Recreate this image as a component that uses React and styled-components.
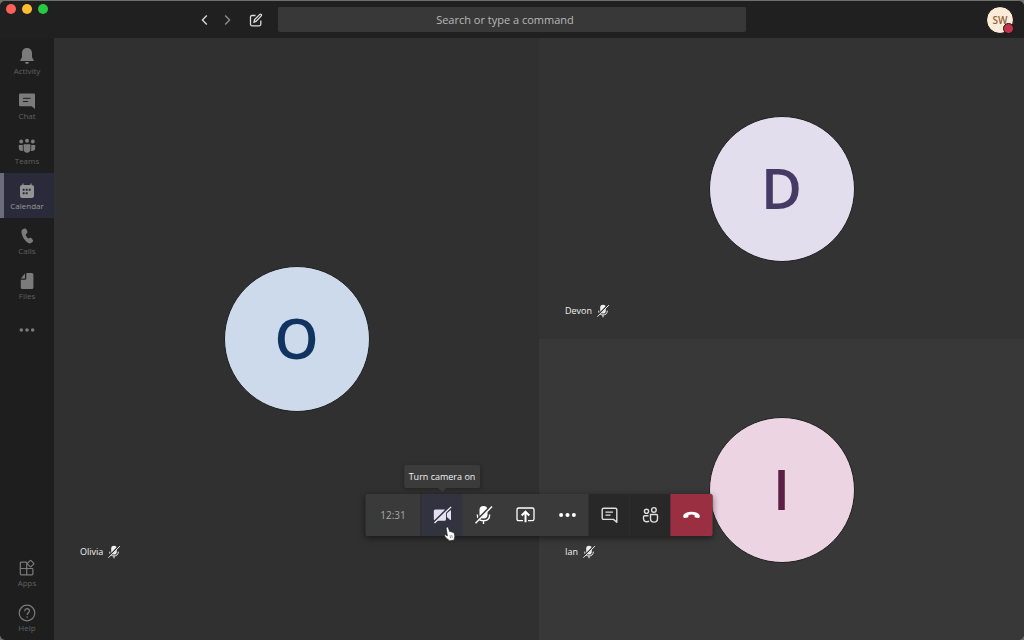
import { styled, createGlobalStyle } from "styled-components"

const GlobalStyle = createGlobalStyle`
    * {
        box-sizing: border-box;
    }
    body {
        margin: 0;
        background: #6d716e;
        font-family: "Open Sans", "Noto Sans", sans-serif;
    }
    button, input {
        font-family: inherit;
    }
`

const BellIcon = () => (
    <svg width="16" height="18" viewBox="0 0 16 18" fill="currentColor">
        <path d="M8 1C4.900 1 3 3.300 3 6v4.200L1.300 13.200v.8h13.400v-.8L13 10.200V6c0-2.700-1.900-5-5-5z" />
        <path d="M6 15h4c-.2 1.200-1 1.900-2 1.900S6.200 16.200 6 15z" />
    </svg>
)

const ChatIcon = () => (
    <svg width="16" height="18" viewBox="0 0 16 18">
        <path d="M1.300 1.500h13.400q1.300 0 1.300 1.300V17l-3.300-2.800H1.300Q0 14.200 0 12.900V2.800q0-1.300 1.300-1.300z" fill="currentColor" />
        <path d="M4 6.300h7.500M4 9.500h5" stroke="#1e1e1e" strokeWidth="1" />
    </svg>
)

const TeamsIcon = () => (
    <svg width="18" height="18" viewBox="0 0 18 18" fill="currentColor">
        <circle cx="3.200" cy="4.500" r="1.900" />
        <circle cx="9" cy="3.700" r="2" />
        <circle cx="14.800" cy="4.500" r="1.900" />
        <path d="M5.600 7.300h6.800v5.300c0 2-1.400 3.200-3.400 3.200s-3.400-1.200-3.400-3.200z" />
        <path d="M.8 8h4v4.500c0 .6.100 1.100.3 1.500C2.300 14.400.8 13 .8 11zM17.200 8h-4v4.500c0 .6-.1 1.100-.3 1.500 2.800.4 4.300-1 4.300-3z" />
    </svg>
)

const CalendarIcon = () => (
    <svg width="16" height="18" viewBox="0 0 16 18">
        <path d="M4 1.500v3M12 1.500v3" stroke="currentColor" strokeWidth="1.200" />
        <rect x="1" y="3" width="14" height="13" rx="2.200" fill="currentColor" />
        <path d="M6.700 7.800h1.900M9.700 7.800h1.900M3.700 7.800h1.900M3.700 11.200h1.900M6.700 11.200h1.900" stroke="#272735" strokeWidth="1.900" />
    </svg>
)

const PhoneIcon = () => (
    <svg width="16" height="18" viewBox="0 0 16 18" fill="currentColor">
        <path d="M4.300 2.100l1.500-.5c.8-.2 1.400.1 1.700.8l.9 2.200c.2.600.1 1.100-.3 1.500L6.700 7.400c.3 1.500 1.300 3.100 2.500 4l1.900-.6c.6-.2 1.100 0 1.400.5l1.300 1.800c.4.600.4 1.200-.1 1.700l-.9.8c-1 .9-2.200 1-3.400.4C6 14.300 3.400 10 2.500 5.800c-.3-1.700.3-3.200 1.800-3.700z" />
    </svg>
)

const FileIcon = () => (
    <svg width="16" height="18" viewBox="0 0 16 18" fill="currentColor">
        <path d="M7.300 1h5.500q1.600 0 1.600 1.600v12.800q0 1.600-1.600 1.600H3.400q-1.600 0-1.600-1.600V7.800h4q1.500 0 1.500-1.500z" />
        <path d="M6 1.600v4.300q0 .6-.6.6H1.900z" />
    </svg>
)

const DotsIcon = ({ size }) => (
    <svg width={size} height={size} viewBox="0 0 18 18" fill="currentColor">
        <circle cx="2.600" cy="9" r="2" />
        <circle cx="9" cy="9" r="2" />
        <circle cx="15.400" cy="9" r="2" />
    </svg>
)

const AppsIcon = () => (
    <svg width="18" height="18" viewBox="0 0 18 18" fill="none" stroke="currentColor" strokeWidth="1.200">
        <path d="M8.700 3.200H3.300q-1 0-1 1v10.600q0 1 1 1h10.600q1 0 1-1V10.200q0-.7-.7-.7H2.300M8.700 3.200v12.600" />
        <rect x="10.100" y="2.100" width="5" height="5" rx=".7" transform="rotate(45 12.600 4.600)" />
    </svg>
)

const HelpIcon = () => (
    <svg width="18" height="18" viewBox="0 0 18 18" fill="none" stroke="currentColor" strokeWidth="1.200">
        <circle cx="9" cy="9" r="7.800" />
        <path d="M6.700 7.200c0-1.600 1-2.500 2.400-2.500s2.300.9 2.300 2.200c0 1.800-2.300 2-2.300 4.100" />
        <circle cx="9.100" cy="13" r=".5" fill="currentColor" strokeWidth=".6" />
    </svg>
)

const ChevronIcon = ({ forward }) => (
    <svg width="7" height="12" viewBox="0 0 7 12" fill="none" stroke="currentColor" strokeWidth="1.300">
        <path d={forward ? "M1.200 1.500L5.600 6l-4.400 4.500" : "M5.800 1.500L1.400 6l4.400 4.500"} />
    </svg>
)

const ComposeIcon = () => (
    <svg width="14" height="14" viewBox="0 0 14 14" fill="none" stroke="currentColor" strokeWidth="1.300">
        <path d="M6.500 2.500H3q-1.500 0-1.500 1.500v7.300Q1.500 12.800 3 12.800h7.300q1.500 0 1.500-1.500V7.500" />
        <path d="M5 9.200l.6-2.600 5.200-5.200q.7-.6 1.400 0t0 1.500L7.300 8.200z" />
    </svg>
)

const CameraOffIcon = () => (
    <svg width="20" height="20" viewBox="0 0 20 20">
        <path d="M2.800 4.500h9.200q1.500 0 1.500 1.500v8.200q0 1.500-1.500 1.500H2.800q-1.500 0-1.500-1.500V6q0-1.500 1.500-1.500zM14.400 8.300l3.300-2.900q.8-.5.800.4v8.700q0 .9-.8.400l-3.300-2.900z" fill="#e4e0f3" />
        <path d="M1.700 17.100L17.700 1.500" stroke="#33323f" strokeWidth="2.600" />
        <path d="M2 18L18.600 1.900" stroke="#f2f0fa" strokeWidth="1.300" />
    </svg>
)

const MicOffIcon = ({ size, gap }) => (
    <svg width={size} height={size} viewBox="0 0 20 20" fill="none">
        <rect x="6" y="1" width="8" height="12.500" rx="4" fill="currentColor" />
        <path d="M3.800 9.500c0 3.900 2.400 6.200 6.200 6.200s6.200-2.300 6.200-6.200M10 15.500V19" stroke="currentColor" strokeWidth="1.400" />
        <path d="M1.700 17.200L17.500 1.200" stroke={gap} strokeWidth="2.400" />
        <path d="M2 18.200L18.500 1.600" stroke="currentColor" strokeWidth="1.400" />
    </svg>
)

const ShareIcon = () => (
    <svg width="20" height="20" viewBox="0 0 20 20" fill="none" stroke="currentColor">
        <path d="M7.500 15.700H3.200q-1.700 0-1.700-1.700V4.700Q1.500 3 3.200 3h13.600q1.700 0 1.700 1.700V14q0 1.700-1.700 1.700h-4.300" strokeWidth="1.300" />
        <path d="M10 17.300V7.500M6.200 10.500L10 6.700l3.800 3.800" strokeWidth="2" />
    </svg>
)

const ConversationIcon = () => (
    <svg width="18" height="18" viewBox="0 0 18 18" fill="none" stroke="currentColor" strokeWidth="1.400">
        <path d="M3.200 2.200h11.600q1.500 0 1.500 1.500v12.500L13 13.400H3.200q-1.500 0-1.500-1.500V3.700q0-1.500 1.500-1.500z" strokeLinejoin="round" />
        <path d="M5 6.200h7.500M5 9.200h5" strokeWidth="1.300" />
    </svg>
)

const PeopleIcon = () => (
    <svg width="18" height="18" viewBox="0 0 18 18" fill="none" stroke="currentColor" strokeWidth="1.400">
        <circle cx="5" cy="5.300" r="2.100" />
        <circle cx="12.400" cy="3.900" r="2.300" />
        <path d="M9 8.500h5.800q1.200 0 1.200 1.200v2.800c0 2.200-1.300 3.600-3.500 3.600S9 14.700 9 12.500z" />
        <path d="M7 9.700H3.200Q2 9.700 2 10.900v1.300c0 2.300 1.600 3.500 3.500 3.500.9 0 1.500-.2 2.100-.5" />
    </svg>
)

const HangUpIcon = () => (
    <svg width="18" height="18" viewBox="0 0 18 18" fill="currentColor">
        <path d="M9 5.800c3.600 0 6.600 1.100 7.900 2.900.5.900.5 1.800.2 2.600-.2.600-.7.900-1.400.7l-2.600-.4c-.6-.1-.9-.5-1-1.100l-.2-1.500a8.700 8.700 0 0 0-5.800 0l-.2 1.500c-.1.600-.4 1-1 1.100l-2.600.4c-.7.200-1.200-.1-1.400-.7-.3-.8-.3-1.700.2-2.600C2.400 6.900 5.400 5.800 9 5.800z" />
    </svg>
)

const Pointer = () => (
    <svg width="12" height="16" viewBox="0 0 12 16">
        <path
            d="M3.400 1.200c.7-.3 1.300 0 1.500.7l1.300 3.700c.6-.4 1.300-.2 1.500.4.600-.3 1.200-.1 1.400.4.800-.2 1.300.1 1.500.8l.6 2.200c.3 1.200.1 2.100-.3 3l-.2 1.600-5 .9-.8-1.200c-1.200-.5-2.600-2-3.700-3.600-.6-.9.5-1.700 1.300-1.100l1.400 1L2.700 2.500c-.1-.6.100-1.100.7-1.300z"
            fill="#fff"
            stroke="#222"
            strokeWidth=".7"
        />
        <path d="M6.500 9.300l.6 2.900M8.200 9l.6 2.800" stroke="#555" strokeWidth=".6" />
    </svg>
)

const mainLinks = [
    { label: "Activity", icon: <BellIcon /> },
    { label: "Chat", icon: <ChatIcon /> },
    { label: "Teams", icon: <TeamsIcon /> },
    { label: "Calendar", icon: <CalendarIcon />, active: true },
    { label: "Calls", icon: <PhoneIcon /> },
    { label: "Files", icon: <FileIcon /> }
]

const footerLinks = [
    { label: "Apps", icon: <AppsIcon /> },
    { label: "Help", icon: <HelpIcon /> }
]

const people = [
    { name: "Olivia", area: "olivia", back: "#303030", circle: "#cddaeb", ink: "#10335f", drop: 80 },
    { name: "Devon", area: "devon", back: "#333333", circle: "#e2deee", ink: "#443a63", drop: 20 },
    { name: "Ian", area: "ian", back: "#383838", circle: "#ecd4e2", ink: "#5c1f45", drop: 80 }
]

const renderLink = (e) => (
    <Styled.SideLink key={e.label} href="#" $active={e.active}>
        <Styled.SideIcon $active={e.active}>{e.icon}</Styled.SideIcon>
        {e.label}
    </Styled.SideLink>
)

export default function App() {
    return (<Styled.Window>
        <GlobalStyle />
        <Styled.Header>
            <Styled.HeaderLeft>
                <Styled.Lights>
                    <Styled.Light $color="#fe5f57" />
                    <Styled.Light $color="#febc2e" />
                    <Styled.Light $color="#28c840" />
                </Styled.Lights>
                <Styled.History>
                    <Styled.HeaderButton aria-label="Back"><ChevronIcon /></Styled.HeaderButton>
                    <Styled.HeaderButton aria-label="Forward" $dim><ChevronIcon forward /></Styled.HeaderButton>
                </Styled.History>
                <Styled.HeaderButton aria-label="New chat"><ComposeIcon /></Styled.HeaderButton>
            </Styled.HeaderLeft>
            <Styled.Search type="text" aria-label="Search" placeholder="Search or type a command" />
            <Styled.Profile aria-label="Profile">
                SW
                <Styled.Status />
            </Styled.Profile>
        </Styled.Header>
        <Styled.Body>
            <Styled.Sidebar>
                {mainLinks.map(renderLink)}
                <Styled.MoreApps aria-label="More apps"><DotsIcon size={16} /></Styled.MoreApps>
                <Styled.Spacer />
                {footerLinks.map(renderLink)}
            </Styled.Sidebar>
            <Styled.Stage>
                {people.map((p) => (
                    <Styled.Tile key={p.name} $area={p.area} $back={p.back}>
                        <Styled.Avatar $circle={p.circle} $ink={p.ink}>{p.name[0]}</Styled.Avatar>
                        <Styled.Name $drop={p.drop}>
                            {p.name}
                            <MicOffIcon size={14} gap={p.back} />
                        </Styled.Name>
                    </Styled.Tile>
                ))}
                <Styled.CallBar>
                    <Styled.Timer>12:31</Styled.Timer>
                    <Styled.CallButton $kind="active" aria-label="Turn camera on">
                        <CameraOffIcon />
                        <Styled.Tooltip>Turn camera on</Styled.Tooltip>
                        <Styled.Cursor><Pointer /></Styled.Cursor>
                    </Styled.CallButton>
                    <Styled.CallButton aria-label="Unmute"><MicOffIcon size={20} gap="#3a3a3a" /></Styled.CallButton>
                    <Styled.CallButton aria-label="Share"><ShareIcon /></Styled.CallButton>
                    <Styled.CallButton aria-label="More actions"><DotsIcon size={18} /></Styled.CallButton>
                    <Styled.CallButton $kind="dark" aria-label="Show conversation"><ConversationIcon /></Styled.CallButton>
                    <Styled.CallButton $kind="dark" aria-label="Show participants"><PeopleIcon /></Styled.CallButton>
                    <Styled.CallButton $kind="danger" aria-label="Hang up"><HangUpIcon /></Styled.CallButton>
                </Styled.CallBar>
            </Styled.Stage>
        </Styled.Body>
    </Styled.Window>)
}

const callColors = {
    active: "#33323f",
    dark: "#282828",
    danger: "#9b2f42"
}

const Styled = {
    Window: styled.div`
        display: flex;
        flex-direction: column;
        min-height: 100vh;
        border-top: 1px solid #6d716e;
        border-radius: 6px;
        overflow: hidden;
        background: #202020;
    `,
    Header: styled.header`
        display: grid;
        grid-template-columns: 28fr 47fr 28fr;
        align-items: center;
        height: 37px;
        background: #202020;
    `,
    HeaderLeft: styled.div`
        display: flex;
        align-items: center;
        gap: 18px;
        height: 100%;
        padding: 0 15px 0 6px;
    `,
    Lights: styled.div`
        display: flex;
        align-self: flex-start;
        gap: 6px;
        margin-right: auto;
        padding-top: 3px;
    `,
    Light: styled.span`
        width: 10px;
        height: 10px;
        border-radius: 50%;
        background: ${(p) => p.$color};
    `,
    History: styled.div`
        display: flex;
        gap: 16px;
    `,
    HeaderButton: styled.button`
        display: flex;
        padding: 0;
        border: 0;
        background: none;
        color: ${(p) => p.$dim ? "#8f8f8f" : "#dcdcdc"};
    `,
    Search: styled.input`
        width: 100%;
        height: 25px;
        padding: 0 22px 0 8px;
        border: 0;
        border-radius: 2px;
        background: #383838;
        color: #c4c4c4;
        font-size: 11px;
        text-align: center;
        &::placeholder {
            color: #b8b8b8;
            opacity: 1;
        }
    `,
    Profile: styled.button`
        position: relative;
        justify-self: end;
        width: 28px;
        height: 28px;
        margin-right: 10px;
        padding: 0;
        border: 1px solid #0c0c0c;
        border-radius: 50%;
        background: #fdebd9;
        color: #8c6239;
        font-size: 10px;
        font-weight: 600;
    `,
    Status: styled.span`
        position: absolute;
        right: -1px;
        bottom: -1px;
        width: 11px;
        height: 11px;
        border: 1px solid #151515;
        border-radius: 50%;
        background: #c4314b;
    `,
    Body: styled.div`
        display: flex;
        flex: 1;
    `,
    Sidebar: styled.nav`
        display: flex;
        flex-direction: column;
        width: 54px;
        background: #1e1e1e;
    `,
    SideLink: styled.a`
        display: flex;
        flex-direction: column;
        align-items: center;
        height: 45px;
        padding-top: 9px;
        background: ${(p) => p.$active ? "#2a2a3a" : "none"};
        box-shadow: ${(p) => p.$active ? "inset 4px 0 #6c6c7a" : "none"};
        color: ${(p) => p.$active ? "#9a9a9a" : "#606060"};
        font-size: 8px;
        line-height: 12px;
        text-decoration: none;
    `,
    SideIcon: styled.span`
        display: flex;
        height: 18px;
        color: ${(p) => p.$active ? "#949494" : "#7b7b7b"};
    `,
    MoreApps: styled.button`
        display: flex;
        align-items: center;
        justify-content: center;
        height: 43px;
        padding: 0;
        border: 0;
        background: none;
        color: #7b7b7b;
    `,
    Spacer: styled.div`
        flex: 1;
    `,
    Stage: styled.main`
        position: relative;
        display: grid;
        flex: 1;
        grid-template-columns: 1fr 1fr;
        grid-template-rows: 1fr 1fr;
        grid-template-areas: "olivia devon" "olivia ian";
    `,
    Tile: styled.section`
        display: grid;
        grid-area: ${(p) => p.$area};
        grid-template-areas: "tile";
        background: ${(p) => p.$back};
    `,
    Avatar: styled.div`
        display: flex;
        grid-area: tile;
        align-items: center;
        justify-content: center;
        place-self: center;
        width: 146px;
        height: 146px;
        padding-bottom: 4px;
        border: 1px solid #202020;
        border-radius: 50%;
        background: ${(p) => p.$circle};
        color: ${(p) => p.$ink};
        font-size: 56px;
        font-weight: 600;
    `,
    Name: styled.div`
        display: flex;
        grid-area: tile;
        align-items: center;
        align-self: end;
        justify-self: start;
        gap: 4px;
        margin: 0 0 ${(p) => p.$drop}px 26px;
        color: #f0f0f0;
        font-size: 9px;
        line-height: 16px;
    `,
    CallBar: styled.div`
        position: absolute;
        bottom: 104px;
        left: 50%;
        display: flex;
        height: 42px;
        border-radius: 2px;
        background: #3a3a3a;
        box-shadow: 0 2px 6px rgba(0, 0, 0, 0.5);
        transform: translateX(-50%);
    `,
    Timer: styled.time`
        display: flex;
        align-items: center;
        justify-content: center;
        width: 56px;
        border-right: 1px solid #262626;
        color: #a8a8a8;
        font-size: 10px;
    `,
    CallButton: styled.button`
        position: relative;
        display: flex;
        align-items: center;
        justify-content: center;
        width: ${(p) => p.$kind === "dark" || p.$kind === "active" ? "41px" : "42px"};
        padding: 0;
        border: 0;
        border-radius: ${(p) => p.$kind === "danger" ? "0 2px 2px 0" : "0"};
        background: ${(p) => callColors[p.$kind] || "none"};
        color: ${(p) => p.$kind === "dark" ? "#dedede" : "#fff"};
    `,
    Tooltip: styled.span`
        position: absolute;
        bottom: 48px;
        left: 50%;
        padding: 4px 5px;
        border-radius: 2px;
        background: #3b3b3b;
        box-shadow: 0 1px 4px rgba(0, 0, 0, 0.3);
        color: #f0f0f0;
        font-size: 9px;
        line-height: 15px;
        white-space: nowrap;
        transform: translateX(-50%);
        &::after {
            content: "";
            position: absolute;
            top: 100%;
            left: 50%;
            border: 4px solid transparent;
            border-top-color: #3b3b3b;
            transform: translateX(-50%);
        }
    `,
    Cursor: styled.span`
        position: absolute;
        top: 32px;
        left: 22px;
        display: flex;
        z-index: 1;
    `
}
